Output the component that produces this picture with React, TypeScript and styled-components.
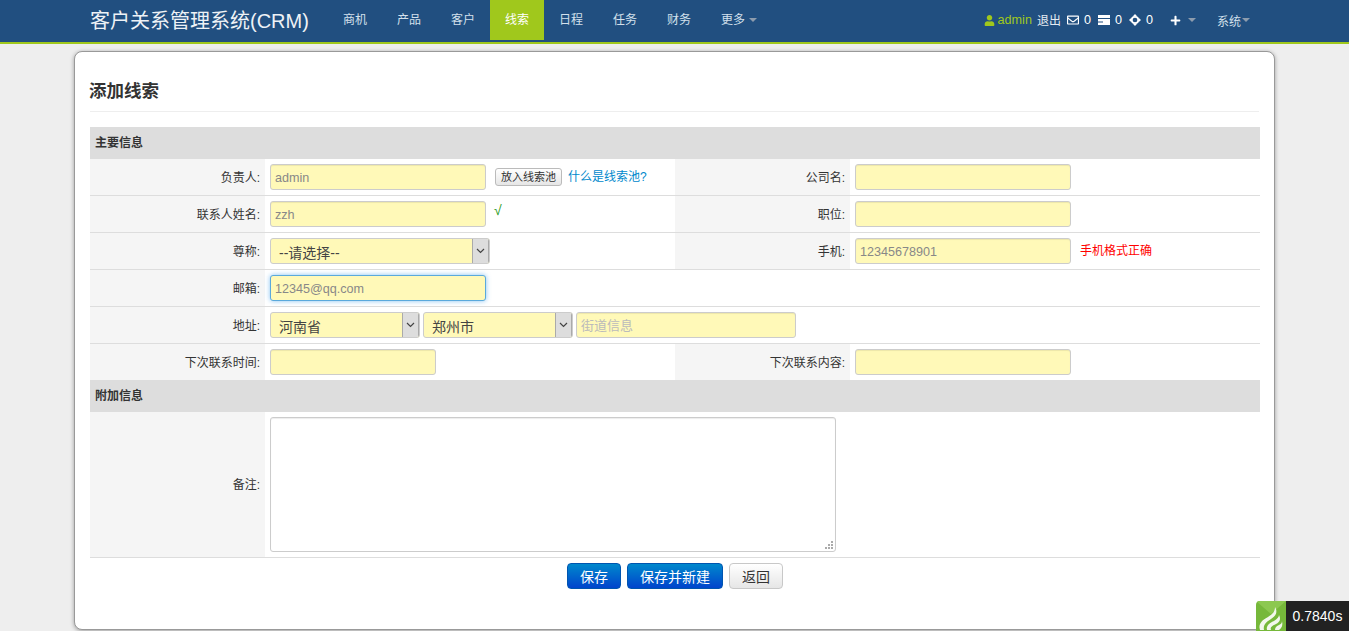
import styled, { createGlobalStyle } from 'styled-components'
import { FaUser, FaRegEnvelope, FaPlus } from 'react-icons/fa'

const Global = createGlobalStyle`
  html, body {
    margin: 0;
    padding: 0;
    height: 631px;
    overflow: hidden;
    background: #eeeeee;
    font-family: "Liberation Sans", "Noto Sans CJK SC", sans-serif;
    font-size: 12px;
    color: #333;
  }
  * { box-sizing: border-box; }
`

const Navbar = styled.header`
  height: 44px;
  background: #214f80;
  border-bottom: 2px solid #a0c81c;
  display: flex;
  align-items: flex-start;
  padding-left: 90px;
  color: #fff;
`

const Brand = styled.a`
  font-size: 20px;
  line-height: 42px;
  color: #eef2f6;
  width: 238px;
  flex: none;
`

const NavList = styled.nav`
  display: flex;
`

const NavItem = styled.a<{ $active?: boolean }>`
  height: 40px;
  line-height: 40px;
  padding: 0 15px;
  font-size: 12px;
  color: ${p => (p.$active ? '#fff' : '#d3e0ec')};
  background: ${p => (p.$active ? '#a0c81c' : 'transparent')};
  display: flex;
  align-items: center;
  gap: 4px;
`

const Caret = styled.i`
  display: inline-block;
  width: 0;
  height: 0;
  border-left: 4px solid transparent;
  border-right: 4px solid transparent;
  border-top: 4px solid #8d9cad;
`

const UserBar = styled.div`
  margin-left: auto;
  margin-right: 99px;
  height: 40px;
  display: flex;
  align-items: center;
  color: #e4ebf2;
  font-size: 12px;
`

const Admin = styled.span`
  display: flex;
  align-items: center;
  gap: 3px;
  color: #a0c81c;
  font-size: 12.6px;
  margin-right: 5px;
  svg { width: 11px; height: 11px; }
`

const Logout = styled.span`
  margin-right: 6px;
  padding-bottom: 1px;
`

const Counter = styled.span`
  display: flex;
  align-items: center;
  gap: 5px;
  margin-right: 7px;
  color: #fff;
  font-size: 12.6px;
  svg { display: block; width: 12px; height: 12px; }
`

const Adder = styled.span`
  display: flex;
  align-items: center;
  gap: 7px;
  margin-left: 10px;
  margin-right: 21px;
  svg { width: 11px; height: 11px; color: #fff; }
`

const SystemMenu = styled.span`
  display: flex;
  align-items: center;
  gap: 1px;
  color: #d3e0ec;
`

const Card = styled.main`
  width: 1201px;
  height: 579px;
  margin: 7px 0 0 74px;
  padding: 15px;
  background: #fff;
  border: 1px solid #999;
  border-radius: 8px;
  box-shadow: 0 1px 4px rgba(0, 0, 0, 0.35);
`

const Title = styled.h3`
  margin: 0 0 15px;
  padding: 11px 0 9px;
  height: 45px;
  border-bottom: 1px solid #eeeeee;
  font-size: 17.5px;
  line-height: 26px;
  font-weight: bold;
  color: #333;
  text-indent: -1px;
`

const Table = styled.table`
  width: 1170px;
  table-layout: fixed;
  border-collapse: separate;
  border-spacing: 0;
`

const SectionRow = styled.th`
  height: 32px;
  background: #dddddd;
  text-align: left;
  padding: 0 5px 3px;
  font-size: 12px;
  font-weight: bold;
  color: #333;
`

const Row = styled.tr<{ $last?: boolean }>`
  & > td {
    border-bottom: ${p => (p.$last ? 'none' : '1px solid #dddddd')};
  }
`

const Label = styled.td`
  background: #f5f5f5;
  text-align: right;
  vertical-align: middle;
  padding: 0 5px 2px 0;
  color: #333;
  font-size: 12px;
`

const Cell = styled.td`
  padding: 5px;
  vertical-align: top;
  white-space: nowrap;
`

const CellInner = styled.div`
  display: flex;
  align-items: flex-start;
`

const TextInput = styled.input<{ $width: number; $focused?: boolean }>`
  display: block;
  width: ${p => p.$width}px;
  height: 26px;
  padding: 2px 4px 0;
  font-family: inherit;
  font-size: 12.6px;
  color: #888;
  background: #fff9b8;
  border: 1px solid ${p => (p.$focused ? '#5aa9dc' : '#cccccc')};
  border-radius: 3px;
  outline: none;
  box-shadow: ${p => (p.$focused ? '0 0 5px rgba(82, 168, 236, 0.7)' : 'inset 0 1px 1px rgba(0, 0, 0, 0.075)')};
  &::placeholder { color: #bbb; opacity: 1; font-size: 13px; }
`

const SelectBox = styled.div<{ $width: number }>`
  display: flex;
  width: ${p => p.$width}px;
  height: 26px;
  border: 1px solid #cccccc;
  border-radius: 3px;
  background: #fff9b8;
  overflow: hidden;
`

const SelectField = styled.select`
  appearance: none;
  flex: 1;
  min-width: 0;
  border: none;
  outline: none;
  background: transparent;
  padding: 4px 0 0 8px;
  font-family: inherit;
  font-size: 14px;
  color: #444;
`

const SelectArrow = styled.span`
  flex: none;
  width: 17px;
  display: flex;
  align-items: center;
  justify-content: center;
  background: #dddddd;
  border-left: 1px solid #aaa;
  border-right: 1px solid #aaa;
  svg { width: 9px; height: 6px; }
`

const AddressFields = styled.div`
  display: flex;
  gap: 3px;
`

const PoolButton = styled.button`
  height: 18px;
  width: 67px;
  margin: 4px 0 0 9px;
  padding: 0;
  font-family: inherit;
  font-size: 11px;
  line-height: 16px;
  color: #333;
  background: linear-gradient(#ffffff, #e6e6e6);
  border: 1px solid #bbb;
  border-radius: 3px;
`

const HelpLink = styled.a`
  margin: 3px 0 0 6px;
  color: #0088cc;
  font-size: 12px;
`

const Tick = styled.span`
  margin: 1px 0 0 8px;
  color: #2a9a1c;
  font-size: 14px;
`

const Valid = styled.span`
  margin: 3px 0 0 9px;
  color: #ff0000;
  font-size: 12px;
`

const NotesWrap = styled.div`
  position: relative;
  width: 566px;
  height: 135px;
`

const Notes = styled.textarea`
  display: block;
  width: 566px;
  height: 135px;
  resize: none;
  border: 1px solid #cccccc;
  border-radius: 3px;
  background: #fff;
  box-shadow: inset 0 1px 1px rgba(0, 0, 0, 0.075);
  outline: none;
`

const Grip = styled.svg`
  position: absolute;
  right: 3px;
  bottom: 3px;
  width: 8px;
  height: 8px;
`

const Actions = styled.div`
  display: flex;
  justify-content: center;
  gap: 6px;
  padding: 5px 0 0 1px;
`

const Button = styled.button<{ $primary?: boolean; $width: number }>`
  width: ${p => p.$width}px;
  height: 26px;
  padding: 0;
  font-family: inherit;
  font-size: 14px;
  border-radius: 4px;
  color: ${p => (p.$primary ? '#fff' : '#333')};
  background: ${p => (p.$primary ? 'linear-gradient(#0088cc, #0044cc)' : 'linear-gradient(#ffffff, #e6e6e6)')};
  border: 1px solid ${p => (p.$primary ? '#0055b0' : '#c8c8c8')};
`

const Timer = styled.div`
  position: fixed;
  right: 0;
  bottom: 0;
  height: 30px;
  display: flex;
  align-items: stretch;
`

const TimerLogo = styled.div`
  width: 30px;
  background: #76b83a;
  border-radius: 4px 0 0 0;
  overflow: hidden;
  svg { display: block; width: 30px; height: 30px; }
`

const TimerValue = styled.div`
  width: 63px;
  background: #222222;
  color: #fff;
  font-size: 14px;
  line-height: 30px;
  text-align: center;
`

const Chevron = () => (
  <svg viewBox="0 0 9 6">
    <path d="M1 1l3.5 3.5L8 1" fill="none" stroke="#444" strokeWidth="1.2" />
  </svg>
)

const TasksIcon = () => (
  <svg viewBox="0 0 12 12">
    <path d="M0 1h12v10H0z" fill="#fff" />
    <path d="M0 4h12v1H0zM0 7.5h5v1H0z" fill="#214f80" />
  </svg>
)

const MoveIcon = () => (
  <svg viewBox="0 0 12 12">
    <path d="M6 0l2.4 2.6H3.6zM6 12L3.6 9.4h4.8zM0 6l2.6-2.4v4.8zM12 6L9.4 8.4V3.6z" fill="#fff" />
    <circle cx="6" cy="6" r="3.2" fill="none" stroke="#fff" strokeWidth="1.7" />
  </svg>
)

const Select = ({ width, value }: { width: number; value: string }) => (
  <SelectBox $width={width}>
    <SelectField defaultValue={value}>
      <option>{value}</option>
    </SelectField>
    <SelectArrow>
      <Chevron />
    </SelectArrow>
  </SelectBox>
)

const navItems = ['商机', '产品', '客户', '线索', '日程', '任务', '财务']

function App() {
  return (
    <>
      <Global />
      <Navbar>
        <Brand>客户关系管理系统(CRM)</Brand>
        <NavList>
          {navItems.map(item => (
            <NavItem key={item} $active={item === '线索'}>{item}</NavItem>
          ))}
          <NavItem>更多<Caret /></NavItem>
        </NavList>
        <UserBar>
          <Admin><FaUser />admin</Admin>
          <Logout>退出</Logout>
          <Counter><FaRegEnvelope />0</Counter>
          <Counter><TasksIcon />0</Counter>
          <Counter><MoveIcon />0</Counter>
          <Adder><FaPlus /><Caret /></Adder>
          <SystemMenu>系统<Caret /></SystemMenu>
        </UserBar>
      </Navbar>
      <Card>
        <Title>添加线索</Title>
        <Table>
          <colgroup>
            <col style={{ width: 175 }} />
            <col style={{ width: 410 }} />
            <col style={{ width: 175 }} />
            <col style={{ width: 410 }} />
          </colgroup>
          <tbody>
            <tr><SectionRow colSpan={4}>主要信息</SectionRow></tr>
            <Row>
              <Label>负责人:</Label>
              <Cell>
                <CellInner>
                  <TextInput $width={216} defaultValue="admin" readOnly />
                  <PoolButton>放入线索池</PoolButton>
                  <HelpLink>什么是线索池?</HelpLink>
                </CellInner>
              </Cell>
              <Label>公司名:</Label>
              <Cell><TextInput $width={216} /></Cell>
            </Row>
            <Row>
              <Label>联系人姓名:</Label>
              <Cell>
                <CellInner>
                  <TextInput $width={216} defaultValue="zzh" readOnly />
                  <Tick>√</Tick>
                </CellInner>
              </Cell>
              <Label>职位:</Label>
              <Cell><TextInput $width={216} /></Cell>
            </Row>
            <Row>
              <Label>尊称:</Label>
              <Cell><Select width={220} value="--请选择--" /></Cell>
              <Label>手机:</Label>
              <Cell>
                <CellInner>
                  <TextInput $width={216} defaultValue="12345678901" readOnly />
                  <Valid>手机格式正确</Valid>
                </CellInner>
              </Cell>
            </Row>
            <Row>
              <Label>邮箱:</Label>
              <Cell colSpan={3}><TextInput $width={216} $focused defaultValue="12345@qq.com" readOnly /></Cell>
            </Row>
            <Row>
              <Label>地址:</Label>
              <Cell colSpan={3}>
                <AddressFields>
                  <Select width={150} value="河南省" />
                  <Select width={150} value="郑州市" />
                  <TextInput $width={220} placeholder="街道信息" />
                </AddressFields>
              </Cell>
            </Row>
            <Row $last>
              <Label>下次联系时间:</Label>
              <Cell><TextInput $width={166} /></Cell>
              <Label>下次联系内容:</Label>
              <Cell><TextInput $width={216} /></Cell>
            </Row>
            <tr><SectionRow colSpan={4}>附加信息</SectionRow></tr>
            <Row>
              <Label>备注:</Label>
              <Cell colSpan={3}>
                <NotesWrap>
                  <Notes />
                  <Grip viewBox="0 0 8 8">
                    <path d="M6 0h2v2H6zM3 3h2v2H3zM6 3h2v2H6zM0 6h2v2H0zM3 6h2v2H3zM6 6h2v2H6z" fill="#aaa" />
                  </Grip>
                </NotesWrap>
              </Cell>
            </Row>
          </tbody>
        </Table>
        <Actions>
          <Button $primary $width={54}>保存</Button>
          <Button $primary $width={96}>保存并新建</Button>
          <Button $width={54}>返回</Button>
        </Actions>
      </Card>
      <Timer>
        <TimerLogo>
          <svg viewBox="0 0 30 30">
            <path d="M0 0h30L15 13z" fill="#8cc850" />
            <path d="M4 29c-2-6 2-10 8-13 5-3 7-6 7-10 3 5 1 9-4 12-5 3-8 6-7 11z" fill="#f2f7ec" />
            <path d="M11 29c-1-4 2-7 7-9 3-2 5-4 5-6 2 4 1 7-3 9-4 2-6 3-5 6z" fill="#f2f7ec" />
            <path d="M19 29c0-3 2-4 4-5 2-1 3-2 3-4 1 4 0 7-3 9z" fill="#f2f7ec" />
          </svg>
        </TimerLogo>
        <TimerValue>0.7840s</TimerValue>
      </Timer>
    </>
  )
}

export default App
